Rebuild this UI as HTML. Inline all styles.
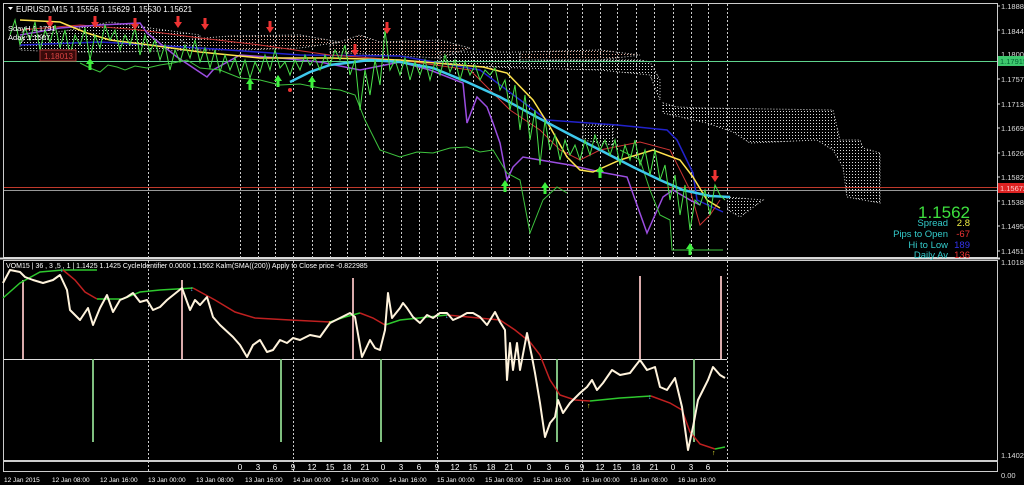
<!DOCTYPE html>
<html><head><meta charset="utf-8"><style>
html,body{margin:0;padding:0;background:#000;width:1024px;height:485px;overflow:hidden}
svg{display:block}
text{font-family:"Liberation Sans",sans-serif;}
</style></head><body>
<svg width="1024" height="485" viewBox="0 0 1024 485" xmlns="http://www.w3.org/2000/svg">
<defs>
<pattern id="dots" width="3" height="3" patternUnits="userSpaceOnUse"><rect x="0" y="0" width="1" height="1" fill="#ddd"/></pattern>
<pattern id="dotsp" width="3" height="3" patternUnits="userSpaceOnUse"><rect x="0" y="0" width="1" height="1" fill="#e8b0a0"/></pattern>
</defs>
<rect width="1024" height="485" fill="#000"/>
<rect x="3.5" y="3.5" width="994" height="254" fill="none" stroke="#ccc" stroke-width="1"/>
<rect x="3.5" y="260.5" width="994" height="200" fill="none" stroke="#ccc" stroke-width="1"/>
<rect x="3.5" y="461.5" width="994" height="10" fill="none" stroke="#ccc" stroke-width="1"/>
<line x1="0" y1="258.5" x2="1000" y2="258.5" stroke="#ddd" stroke-width="2"/>
<g stroke="#ccc" stroke-width="1" stroke-dasharray="2,2">
<line x1="148.5" y1="4" x2="148.5" y2="258"/><line x1="240.5" y1="4" x2="240.5" y2="258"/><line x1="258.5" y1="4" x2="258.5" y2="258"/><line x1="275.5" y1="4" x2="275.5" y2="258"/><line x1="293.5" y1="4" x2="293.5" y2="258"/><line x1="312.5" y1="4" x2="312.5" y2="258"/><line x1="330.5" y1="4" x2="330.5" y2="258"/><line x1="347.5" y1="4" x2="347.5" y2="258"/><line x1="365.5" y1="4" x2="365.5" y2="258"/><line x1="383.5" y1="4" x2="383.5" y2="258"/><line x1="401.5" y1="4" x2="401.5" y2="258"/><line x1="419.5" y1="4" x2="419.5" y2="258"/><line x1="437.5" y1="4" x2="437.5" y2="258"/><line x1="455.5" y1="4" x2="455.5" y2="258"/><line x1="473.5" y1="4" x2="473.5" y2="258"/><line x1="491.5" y1="4" x2="491.5" y2="258"/><line x1="509.5" y1="4" x2="509.5" y2="258"/><line x1="529.5" y1="4" x2="529.5" y2="258"/><line x1="549.5" y1="4" x2="549.5" y2="258"/><line x1="567.5" y1="4" x2="567.5" y2="258"/><line x1="582.5" y1="4" x2="582.5" y2="258"/><line x1="600.5" y1="4" x2="600.5" y2="258"/><line x1="617.5" y1="4" x2="617.5" y2="258"/><line x1="636.5" y1="4" x2="636.5" y2="258"/><line x1="654.5" y1="4" x2="654.5" y2="258"/><line x1="673.5" y1="4" x2="673.5" y2="258"/><line x1="691.5" y1="4" x2="691.5" y2="258"/><line x1="708.5" y1="4" x2="708.5" y2="258"/><line x1="727.5" y1="4" x2="727.5" y2="258"/>
<line x1="148.5" y1="261" x2="148.5" y2="472"/><line x1="293.5" y1="261" x2="293.5" y2="472"/><line x1="437.5" y1="261" x2="437.5" y2="472"/><line x1="582.5" y1="261" x2="582.5" y2="472"/><line x1="727.5" y1="261" x2="727.5" y2="472"/>
</g>
<g stroke="#ddd" stroke-width="1" stroke-dasharray="1,2">
<polygon points="663,103 677,107 703,108 833,110 840,140 860,140 863,148 880,153 880,203 847,197 843,167 833,150 817,140 750,143 733,132 707,123 663,113" fill="url(#dots)"/>
<polygon points="583,125 613,125 613,145 583,140" fill="url(#dots)"/>
<polygon points="727,197 763,200 740,217 728,210" fill="url(#dots)"/>
<polygon points="440,52 520,52 520,62 560,60 640,60 650,62 660,80 660,100 650,75 600,70 520,68 470,66 440,62" fill="url(#dots)"/>
<polygon points="330,45 360,35 380,42 440,40 470,48 440,58 380,55 330,52" fill="url(#dotsp)"/>
<polygon points="180,40 230,36 300,35 340,42 300,48 240,50 200,50" fill="url(#dotsp)"/>
<polygon points="20,38 70,30 110,22 150,28 200,35 200,50 120,52 60,52 20,50" fill="url(#dots)"/>
<polygon points="520,52 600,50 640,55 600,60 520,60" fill="url(#dotsp)"/>
</g>
<line x1="4" y1="61.5" x2="997" y2="61.5" stroke="#5fd38d" stroke-width="1"/>
<line x1="4" y1="187.5" x2="997" y2="187.5" stroke="#c0392b" stroke-width="1"/>
<line x1="4" y1="190.5" x2="997" y2="190.5" stroke="#999" stroke-width="1"/>
<polyline fill="none" stroke="#2222cc" stroke-width="1.5" points="20,45 100,42 200,48 300,55 400,56 480,70 547,120 617,125 667,130 677,140 693,173 697,200 723,212"/>
<polyline fill="none" stroke="#c33" stroke-width="1" points="20,30 80,25 140,30 200,38 260,45 330,55 400,60 470,70 510,110 540,130 560,150 580,160 600,150 640,142 670,150 690,190 700,225 710,215 720,200"/>
<polyline fill="none" stroke="#9b4de0" stroke-width="1.5" points="20,35 60,28 100,25 140,23 147,33 177,57 207,77 213,70 240,55 280,58 320,62 360,70 400,62 430,70 463,83 467,123 477,97 487,107 493,123 500,143 507,180 513,167 523,157 540,160 570,165 600,172 627,177 647,233 663,197 673,190 690,200 700,205"/>
<polyline fill="none" stroke="#3ec43e" stroke-width="1" points="80,63 90,68 100,72 108,65 117,67 125,70 135,66 147,68 160,65 173,63 187,60 200,68 220,70 240,78 260,80 280,85 300,84 320,88 340,90 355,95 365,120 375,140 380,150 400,157 417,152 433,153 450,148 467,147 480,152 493,150 507,173 520,180 530,233 543,200 557,187 567,193"/>
<polyline fill="none" stroke="#3ec43e" stroke-width="1" points="620,150 640,160 650,190 660,215 670,220 672,250 723,250"/>
<polyline fill="none" stroke="#ffe34d" stroke-width="1.5" points="20,20 60,22 87,33 110,40 150,45 200,52 260,58 330,58 400,60 483,67 507,73 533,100 550,127 567,157 580,170 593,172 620,160 653,150 680,160 693,177 707,200 720,208"/>
<polyline fill="none" stroke="#3ec8ec" stroke-width="2.5" points="290,82 310,72 330,65 370,60 400,62 433,68 467,82 500,97 533,115 567,133 600,150 633,167 660,180 683,190 710,196 730,197"/>
<polyline fill="none" stroke="#49e049" stroke-width="1" points="10,35 15,20 20,45 25,28 30,40 35,22 40,50 45,30 50,42 55,25 60,48 65,30 70,55 75,35 80,45 85,28 90,60 95,35 100,48 105,25 110,40 115,30 120,50 125,35 130,45 135,28 140,55 145,35 150,52 155,40 160,60 165,45 170,70 175,50 180,62 185,45 190,58 195,40 200,62 205,48 210,68 215,50 220,72 225,55 230,70 235,58 240,75 245,60 250,78 255,62 260,72 265,55 270,70 275,50 280,68 285,62 290,75 295,60 300,70 305,55 310,65 315,58 320,70 325,55 330,65 335,50 340,60 345,45 350,75 355,60 360,110 365,70 370,95 375,60 380,85 385,30 390,70 395,60 400,75 405,58 410,80 415,62 420,75 425,60 430,80 435,62 440,75 445,55 450,72 455,60 460,80 465,62 470,75 475,65 480,80 485,70 490,75 495,68 500,90 505,80 510,110 515,85 520,130 525,95 530,140 535,110 540,165 545,120 550,150 555,135 560,160 565,140 570,155 575,145 580,160 585,140 590,155 595,135 600,150 605,140 610,155 615,140 620,165 625,145 630,160 635,140 640,165 645,150 650,175 655,150 660,180 665,165 670,200 675,175 680,215 685,185 690,230 695,200 700,205 705,190 710,215 715,185 720,195 725,200"/>
<g fill="#3ef03e">
<path d="M90,58 l-4,6 h2.5 v6 h3 v-6 h2.5z"/><path d="M250,78 l-4,6 h2.5 v6 h3 v-6 h2.5z"/><path d="M278,75 l-4,6 h2.5 v6 h3 v-6 h2.5z"/><path d="M312,76 l-4,6 h2.5 v6 h3 v-6 h2.5z"/><path d="M505,180 l-4,6 h2.5 v6 h3 v-6 h2.5z"/><path d="M545,182 l-4,6 h2.5 v6 h3 v-6 h2.5z"/><path d="M600,166 l-4,6 h2.5 v6 h3 v-6 h2.5z"/><path d="M690,243 l-4,6 h2.5 v6 h3 v-6 h2.5z"/>
</g>
<g fill="#e33">
<path d="M50,28 l-4,-6 h2.5 v-6 h3 v6 h2.5z"/><path d="M95,28 l-4,-6 h2.5 v-6 h3 v6 h2.5z"/><path d="M135,30 l-4,-6 h2.5 v-6 h3 v6 h2.5z"/><path d="M178,28 l-4,-6 h2.5 v-6 h3 v6 h2.5z"/><path d="M205,30 l-4,-6 h2.5 v-6 h3 v6 h2.5z"/><path d="M270,33 l-4,-6 h2.5 v-6 h3 v6 h2.5z"/><path d="M387,34 l-4,-6 h2.5 v-6 h3 v6 h2.5z"/><path d="M355,56 l-4,-6 h2.5 v-6 h3 v6 h2.5z"/><path d="M715,182 l-4,-6 h2.5 v-6 h3 v6 h2.5z"/>
<circle cx="290" cy="90" r="2"/>
</g>
<path d="M8,7 h5 l-2.5,3z" fill="#fff"/>
<text x="16" y="12" font-size="8" fill="#fff">EURUSD,M15  1.15556 1.15629 1.15530 1.15621</text>
<text x="8" y="31" font-size="7.5" fill="#fff">SdayH 1.1791</text>
<text x="8" y="40" font-size="7.5" fill="#fff">Aday  1.1567</text>
<rect x="40" y="50" width="36" height="11" fill="#3a0a0a" stroke="#a33"/>
<text x="44" y="59" font-size="8" fill="#d44">1.18013</text>
<text x="970" y="218" font-size="17" fill="#3ee03e" text-anchor="end">1.1562</text>
<g font-size="9.5" text-anchor="end">
<text x="948" y="226" fill="#3cc">Spread</text><text x="970" y="226" fill="#ee4">2.8</text>
<text x="948" y="237" fill="#3cc">Pips to Open</text><text x="970" y="237" fill="#e33">-67</text>
<text x="948" y="248" fill="#3cc">Hi to Low</text><text x="970" y="248" fill="#33e">189</text>
<text x="948" y="258" fill="#3cc">Daily Av</text><text x="970" y="258" fill="#e33">136</text>
</g>
<g font-size="7.5" fill="#ddd">
<text x="1001" y="9">1.18880</text><text x="1001" y="34">1.18440</text><text x="1001" y="57">1.18000</text>
<text x="1001" y="82">1.17570</text><text x="1001" y="107">1.17130</text><text x="1001" y="131">1.16690</text>
<text x="1001" y="156">1.16260</text><text x="1001" y="180">1.15820</text><text x="1001" y="205">1.15380</text>
<text x="1001" y="229">1.14950</text><text x="1001" y="254">1.14510</text>
<text x="1001" y="265">1.1018</text><text x="1001" y="458">1.1402</text><text x="1001" y="478">0.00</text>
</g>
<g stroke="#ddd"><line x1="997" y1="6" x2="1000" y2="6"/><line x1="997" y1="30" x2="1000" y2="30"/><line x1="997" y1="79" x2="1000" y2="79"/><line x1="997" y1="104" x2="1000" y2="104"/><line x1="997" y1="128" x2="1000" y2="128"/><line x1="997" y1="153" x2="1000" y2="153"/><line x1="997" y1="177" x2="1000" y2="177"/><line x1="997" y1="201" x2="1000" y2="201"/><line x1="997" y1="226" x2="1000" y2="226"/><line x1="997" y1="251" x2="1000" y2="251"/></g>
<rect x="998" y="56" width="26" height="10" fill="#3ec86e"/><text x="1000" y="64" font-size="7.5" fill="#063">1.17915</text>
<rect x="998" y="183" width="26" height="10" fill="#d22"/><text x="1000" y="191" font-size="7.5" fill="#fcc">1.15672</text>
<text x="6" y="268" font-size="7" fill="#fff">VOM15 | 36 , 3 ,5 , 1  |  1.1425 1.1425  CycleIdentifier 0.0000 1.1562  Kalm(SMA((200)) Apply to Close price -0.822985</text>
<line x1="4" y1="359.5" x2="727" y2="359.5" stroke="#ddd" stroke-width="1"/>
<g stroke="#d9aaaa" stroke-width="2">
<line x1="23" y1="280" x2="23" y2="359"/><line x1="182" y1="280" x2="182" y2="359"/><line x1="353" y1="278" x2="353" y2="359"/><line x1="640" y1="276" x2="640" y2="359"/><line x1="721" y1="276" x2="721" y2="359"/>
</g>
<g stroke="#7fbf7f" stroke-width="2">
<line x1="93" y1="359" x2="93" y2="442"/><line x1="281" y1="359" x2="281" y2="442"/><line x1="381" y1="359" x2="381" y2="442"/><line x1="557" y1="359" x2="557" y2="442"/><line x1="694" y1="359" x2="694" y2="442"/>
</g>
<polyline fill="none" stroke="#2ec82e" stroke-width="1.5" points="3,298 20,283 40,272 63,270 97,270"/>
<polyline fill="none" stroke="#c02020" stroke-width="1.5" points="63,270 75,280 85,292 97,299"/>
<polyline fill="none" stroke="#2ec82e" stroke-width="1.5" points="97,299 123,299 140,292 160,290 193,288"/>
<polyline fill="none" stroke="#c02020" stroke-width="1.5" points="193,288 215,300 235,312 255,318 290,320 330,322"/>
<polyline fill="none" stroke="#2ec82e" stroke-width="1.5" points="330,322 345,317 360,313"/>
<polyline fill="none" stroke="#c02020" stroke-width="1.5" points="360,313 373,318 385,325"/>
<polyline fill="none" stroke="#2ec82e" stroke-width="1.5" points="385,325 400,320 447,315"/>
<polyline fill="none" stroke="#c02020" stroke-width="1.5" points="447,315 500,320 515,330 530,342 540,355 550,380 560,395 575,400 590,401"/>
<polyline fill="none" stroke="#2ec82e" stroke-width="1.5" points="590,401 620,398 651,396"/>
<polyline fill="none" stroke="#c02020" stroke-width="1.5" points="651,396 670,403 682,410 690,432 700,444 715,449"/>
<polyline fill="none" stroke="#2ec82e" stroke-width="1.5" points="715,449 725,447"/>
<polyline fill="none" stroke="#fff3dc" stroke-width="2" stroke-linejoin="round" points="3,283 10,270 20,272 25,277 33,280 43,283 53,280 60,275 67,290 70,310 80,320 88,308 93,325 100,308 107,295 113,312 120,300 127,297 133,293 140,302 147,300 153,310 160,307 167,300 177,292 182,288 190,310 195,300 200,305 207,297 213,317 220,325 233,337 240,345 247,357 253,345 260,340 267,352 273,350 280,340 287,343 293,338 300,340 310,335 320,337 330,323 340,318 350,313 355,317 362,357 370,340 375,348 380,350 385,330 388,293 392,318 400,308 403,303 407,308 413,317 420,323 427,315 433,318 440,313 447,313 453,320 460,317 467,313 473,313 480,317 487,325 495,312 500,322 505,330 507,380 510,343 513,370 517,343 520,370 527,333 532,357 535,373 540,403 545,437 550,423 555,417 558,400 563,413 570,403 580,393 587,387 592,380 597,390 603,383 612,370 620,375 630,373 640,360 647,370 655,367 660,387 667,390 675,378 682,407 688,450 693,427 698,400 703,390 708,380 713,367 720,375 725,378"/>
<g font-size="7" fill="#5ae">
<text x="60" y="272">↓</text><text x="190" y="291">↓</text><text x="445" y="318">↓</text><text x="648" y="399">↓</text>
</g>
<g font-size="7" fill="#ee3">
<text x="328" y="325">↑</text><text x="587" y="408">↑</text><text x="712" y="455">↑</text>
</g>
<g font-size="8" fill="#fff" text-anchor="middle">
<text x="240" y="470">0</text><text x="258" y="470">3</text><text x="275" y="470">6</text><text x="293" y="470">9</text><text x="312" y="470">12</text><text x="330" y="470">15</text><text x="347" y="470">18</text><text x="365" y="470">21</text><text x="383" y="470">0</text><text x="401" y="470">3</text><text x="419" y="470">6</text><text x="437" y="470">9</text><text x="455" y="470">12</text><text x="473" y="470">15</text><text x="491" y="470">18</text><text x="509" y="470">21</text><text x="529" y="470">0</text><text x="549" y="470">3</text><text x="567" y="470">6</text><text x="582" y="470">9</text><text x="600" y="470">12</text><text x="617" y="470">15</text><text x="636" y="470">18</text><text x="654" y="470">21</text><text x="673" y="470">0</text><text x="691" y="470">3</text><text x="708" y="470">6</text>
</g>
<g font-size="6.5" fill="#fff">
<text x="4" y="482">12 Jan 2015</text><text x="52" y="482">12 Jan 08:00</text><text x="100" y="482">12 Jan 16:00</text><text x="148" y="482">13 Jan 00:00</text><text x="196" y="482">13 Jan 08:00</text><text x="245" y="482">13 Jan 16:00</text><text x="293" y="482">14 Jan 00:00</text><text x="341" y="482">14 Jan 08:00</text><text x="389" y="482">14 Jan 16:00</text><text x="437" y="482">15 Jan 00:00</text><text x="485" y="482">15 Jan 08:00</text><text x="533" y="482">15 Jan 16:00</text><text x="582" y="482">16 Jan 00:00</text><text x="630" y="482">16 Jan 08:00</text><text x="678" y="482">16 Jan 16:00</text>
</g>
</svg>
</body></html>
